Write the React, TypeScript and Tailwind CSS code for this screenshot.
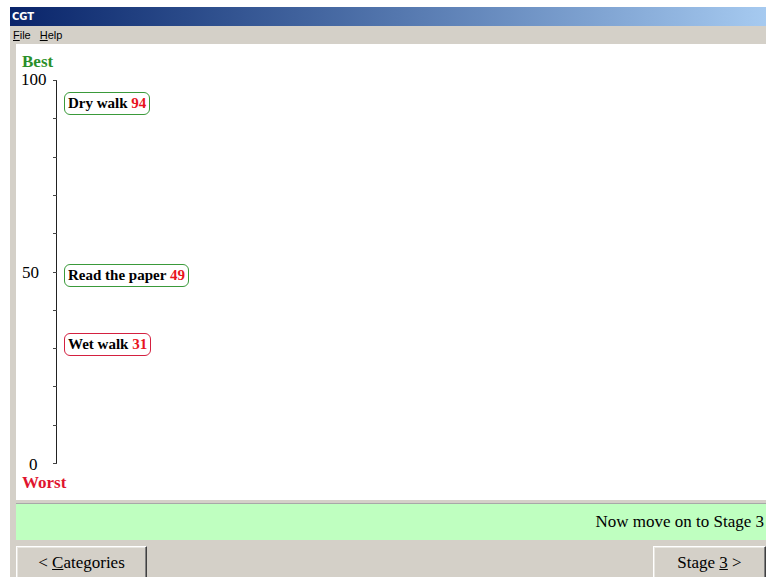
const ticks = [0, 1, 2, 3, 4, 5, 6, 7, 8, 9, 10];

type Activity = { label: string; score: number; good: boolean };

const activities: Activity[] = [
  { label: "Dry walk", score: 94, good: true },
  { label: "Read the paper", score: 49, good: true },
  { label: "Wet walk", score: 31, good: false },
];

// chart scale: 100 sits at y=36, 0 at y=419 inside the white panel
const yFor = (v: number) => 36 + (100 - v) * 3.83;

const ScoreChart = () => (
  <div className="relative h-[456px] shrink-0 bg-white font-['Liberation_Serif',serif]">
    <span className="absolute left-[6px] top-[9px] text-[17px] font-bold leading-none text-[#2a8f2a]">
      Best
    </span>
    <span className="absolute left-[5px] top-[27px] text-[17px] leading-none text-black">100</span>
    <span className="absolute left-[6px] top-[220px] text-[17px] leading-none text-black">50</span>
    <span className="absolute left-[13px] top-[412px] text-[17px] leading-none text-black">0</span>
    <span className="absolute left-[6px] top-[430px] text-[17px] font-bold leading-none text-[#e0142e]">
      Worst
    </span>

    <div className="absolute left-[40px] top-[36px] h-[383px] w-px bg-[#222]" />
    {ticks.map((t) => (
      <div
        key={t}
        className="absolute left-[37px] h-px w-[4px] bg-[#444]"
        style={{ top: yFor(t * 10) }}
      />
    ))}

    {activities.map((a) => (
      <div
        key={a.label}
        className={`absolute left-[48px] flex h-[23px] items-center rounded-[6px] border bg-white px-[3px] text-[15px] font-bold leading-none text-black ${
          a.good ? "border-[#3a9a3a]" : "border-[#d42040]"
        }`}
        style={{ top: yFor(a.score) - 11 }}
      >
        {a.label}&nbsp;<span className="text-[#e8141e]">{a.score}</span>
      </div>
    ))}
  </div>
);

const WinButton = ({ children, className }: { children: React.ReactNode; className?: string }) => (
  <button
    className={`flex h-[34px] items-center justify-center border border-b-[#404040] border-l-white border-r-[#404040] border-t-white bg-[#d4d0c8] font-['Liberation_Serif',serif] text-[17px] text-black shadow-[inset_-1px_-1px_0_#808080,inset_1px_1px_0_#e8e6e0] ${className ?? ""}`}
  >
    {children}
  </button>
);

export default function App() {
  return (
    <div className="h-[577px] w-[766px] overflow-hidden bg-white pl-[10px] pt-[7px]">
      <div className="flex h-[600px] flex-col bg-[#d4d0c8]">
        <div className="flex h-[19px] shrink-0 items-center bg-gradient-to-r from-[#0a246a] to-[#a6caf0] pl-[2px] font-['DejaVu_Sans',sans-serif] text-[10px] font-bold text-white">
          CGT
        </div>
        <div className="flex h-[18px] shrink-0 items-center gap-[9px] pl-[3px] font-['Liberation_Sans',sans-serif] text-[11px] text-black">
          <span>
            <span className="underline">F</span>ile
          </span>
          <span>
            <span className="underline">H</span>elp
          </span>
        </div>

        <div className="flex flex-col pl-[6px]">
          <ScoreChart />
          <div className="mt-[3px] flex h-[37px] shrink-0 items-center justify-end border-t border-[#a8a8a8] bg-[#bfffc0] pr-[2px] font-['Liberation_Serif',serif] text-[17px] text-black">
            Now move on to Stage 3
          </div>
          <div className="mt-[6px] flex shrink-0 justify-between">
            <WinButton className="w-[131px]">
              &lt;&nbsp;<span className="underline">C</span>ategories
            </WinButton>
            <WinButton className="w-[113px]">
              Stage&nbsp;<span className="underline">3</span>&nbsp;&gt;
            </WinButton>
          </div>
        </div>
      </div>
    </div>
  );
}
